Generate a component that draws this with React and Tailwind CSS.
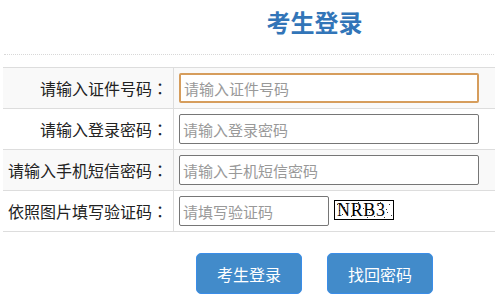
const rows = [
  { label: "请输入证件号码", placeholder: "请输入证件号码", focused: true },
  { label: "请输入登录密码", placeholder: "请输入登录密码" },
  { label: "请输入手机短信密码", placeholder: "请输入手机短信密码" },
];

function Label({ text }) {
  return (
    <div className="w-[171px] border-r border-[#dddddd] flex items-center justify-end pr-[5px] text-[16px] text-[#222] whitespace-nowrap">
      {text}
      <span className="font-['Noto_Sans_CJK_TC',sans-serif]">：</span>
    </div>
  );
}

function Captcha() {
  const dots = [
    [3, 4], [8, 14], [12, 3], [17, 16], [22, 6], [26, 15], [31, 3], [35, 12],
    [40, 16], [44, 5], [48, 14], [52, 9], [55, 4], [57, 15], [5, 10], [19, 11],
    [29, 8], [38, 9], [46, 2], [53, 12], [10, 7], [24, 2], [33, 17], [50, 17],
  ];
  return (
    <svg width="60" height="20" viewBox="0 0 60 20" className="mt-[-3px] ml-[5px] shrink-0">
      <rect x="0.5" y="0.5" width="59" height="19" fill="#fff" stroke="#000" />
      {dots.map(([x, y], i) => (
        <rect key={i} x={x} y={y} width="1" height="1" fill="#333" />
      ))}
      <text x="3" y="16" fontFamily="'Liberation Serif', serif" fontSize="18" fill="#000" textLength="48">
        NRB3
      </text>
    </svg>
  );
}

export default function App() {
  return (
    <div className="w-[498px] h-[304px] bg-white px-[3px] font-['Noto_Sans_CJK_SC','Noto_Sans',sans-serif] overflow-hidden">
      {/* title */}
      <div className="h-[55px] border-b border-dotted border-[#d8d8d8] mx-[1px] pl-[131px] pt-[4px] text-center">
        <h1 className="text-[24px] leading-[36px] font-bold text-[#3275b8]">考生登录</h1>
      </div>

      {/* form table */}
      <div className="mt-[12px] border-t border-[#dddddd]">
        {rows.map((r, i) => (
          <div
            key={r.label}
            className={`flex h-[41px] border-b border-[#dddddd] ${i % 2 === 0 ? "bg-[#f9f9f9]" : "bg-white"}`}
          >
            <Label text={r.label} />
            <div className="flex items-center pl-[5px]">
              <input
                placeholder={r.placeholder}
                className={`w-[300px] h-[30px] bg-white rounded-[2px] px-[3px] text-[15px] placeholder:text-[#999] outline-none ${
                  r.focused ? "border-2 border-[#d69d5c]" : "border border-[#767676]"
                }`}
              />
            </div>
          </div>
        ))}
        <div className="flex h-[41px] border-b border-[#dddddd] bg-white">
          <Label text="依照图片填写验证码" />
          <div className="flex items-center pl-[5px]">
            <input
              placeholder="请填写验证码"
              className="w-[150px] h-[30px] bg-white rounded-[2px] border border-[#767676] px-[3px] text-[15px] placeholder:text-[#999] outline-none"
            />
            <Captcha />
          </div>
        </div>
      </div>

      {/* buttons */}
      <div className="flex justify-center gap-[25px] pl-[131px] mt-[21px]">
        <button className="w-[106px] h-[41px] rounded-[5px] bg-[#428bca] border border-[#3a8de8] text-white text-[16px]">
          考生登录
        </button>
        <button className="w-[106px] h-[41px] rounded-[5px] bg-[#428bca] border border-[#3a8de8] text-white text-[16px]">
          找回密码
        </button>
      </div>
    </div>
  );
}
